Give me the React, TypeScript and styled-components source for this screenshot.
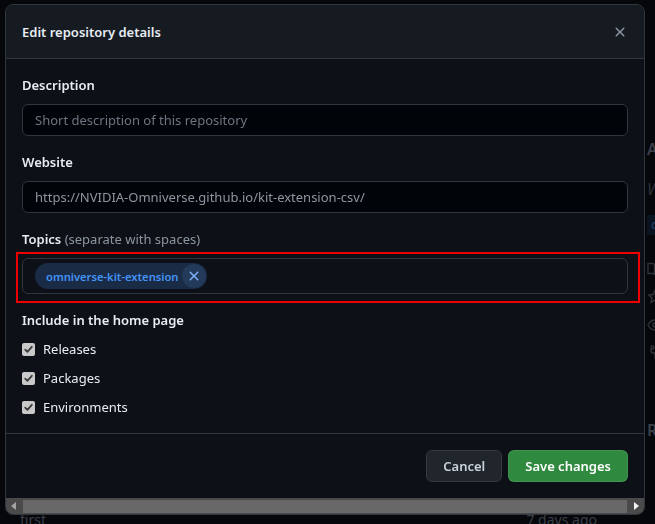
import React from "react";
import styled, { createGlobalStyle } from "styled-components";

const Global = createGlobalStyle`
  * { box-sizing: border-box; }
  html, body { margin: 0; padding: 0; background: #05070b; }
  body {
    width: 655px;
    height: 524px;
    overflow: hidden;
    font-family: "Noto Sans", "Segoe UI", sans-serif;
    -webkit-font-smoothing: antialiased;
  }
`;

/* ---------- background page (dimmed) ---------- */
const Page = styled.div`
  display: grid;
  grid-template-columns: 645px 1fr;
  width: 655px;
  height: 524px;
  overflow: hidden;
  background: #05070b;
`;

const Main = styled.div`
  display: flex;
  flex-direction: column;
  justify-content: flex-end;
`;

const MainRow = styled.div`
  display: flex;
  justify-content: space-between;
  padding: 0 48px 0 20px;
  height: 14px;
  font-size: 14px;
  line-height: 20px;
  color: #3a3f47;
`;

const Sidebar = styled.div`
  display: flex;
  flex-direction: column;
  padding: 139px 0 0 2px;
  color: #32373e;
  white-space: nowrap;
`;

const SideHeading = styled.div`
  font-size: 16px;
  font-weight: 600;
  line-height: 20px;
  color: #3b4048;
`;

const SideText = styled.div`
  margin-top: 20px;
  font-size: 16px;
  line-height: 20px;
  font-style: italic;
  color: #2e333a;
`;

const SideTopic = styled.div`
  margin-top: 16px;
  height: 20px;
  padding-left: 4px;
  background: #0a1320;
  font-size: 12px;
  line-height: 20px;
  font-weight: 600;
  color: #1f3a60;
`;

const SideIcons = styled.div`
  display: flex;
  flex-direction: column;
  gap: 12px;
  margin-top: 26px;
  color: #2e333a;
`;

const SideFoot = styled.div`
  margin-top: 58px;
  font-size: 16px;
  font-weight: 600;
  color: #3b4048;
`;

/* ---------- dialog ---------- */
const Dialog = styled.div`
  position: fixed;
  top: 4px;
  left: 5px;
  width: 640px;
  display: flex;
  flex-direction: column;
  background: #0d1117;
  border: 1px solid #30363d;
  border-radius: 8px;
  overflow: hidden;
`;

const Header = styled.div`
  display: flex;
  align-items: center;
  justify-content: space-between;
  height: 54px;
  padding: 0 16px;
  background: #161b22;
  border-bottom: 1px solid #30363d;
`;

const Title = styled.h1`
  margin: 0;
  font-size: 13px;
  font-weight: 600;
  line-height: 20px;
  color: #e6edf3;
`;

const IconButton = styled.button`
  display: flex;
  align-items: center;
  justify-content: center;
  width: 16px;
  height: 16px;
  padding: 0;
  border: 0;
  background: transparent;
  color: #8b949e;
`;

const Body = styled.div`
  display: flex;
  flex-direction: column;
  gap: 16px;
  padding: 16px;
`;

const Field = styled.div`
  display: flex;
  flex-direction: column;
`;

const Label = styled.label`
  display: block;
  margin-bottom: 9px;
  font-size: 13px;
  font-weight: 600;
  line-height: 20px;
  color: #e6edf3;
`;

const Hint = styled.span`
  font-weight: 400;
  color: #8d96a0;
`;

const TextInput = styled.input`
  height: 32px;
  padding: 0 12px;
  background: #010409;
  border: 1px solid #30363d;
  border-radius: 6px;
  font-family: inherit;
  font-size: 13px;
  color: #8d96a0;
  outline: none;
  &::placeholder { color: #6e7681; }
`;

const TopicBox = styled.div`
  position: relative;
  display: flex;
  align-items: center;
  height: 36px;
  padding: 0 12px;
  background: #0d1117;
  border: 1px solid #30363d;
  border-radius: 6px;
`;

const Highlight = styled.span`
  position: absolute;
  top: -7px;
  left: -7px;
  right: -13px;
  bottom: -10px;
  border: 2px solid #ee0000;
  pointer-events: none;
`;

const Chip = styled.span`
  display: inline-flex;
  align-items: center;
  height: 26px;
  padding: 0 1px 0 11px;
  background: #1a2b45;
  border-radius: 13px;
  font-size: 11.2px;
  font-weight: 600;
  color: #4493f8;
`;

const ChipRemove = styled.span`
  display: flex;
  align-items: center;
  justify-content: center;
  width: 24px;
  height: 24px;
  margin-left: 3px;
  border-radius: 12px;
  background: #243a5a;
  color: #7cb1f8;
`;

const Group = styled.div`
  display: flex;
  flex-direction: column;
  gap: 9px;
`;

const GroupTitle = styled.div`
  font-size: 13px;
  font-weight: 600;
  line-height: 20px;
  color: #e6edf3;
`;

const CheckRow = styled.label`
  display: flex;
  align-items: center;
  gap: 8px;
  height: 20px;
  font-size: 13px;
  color: #e6edf3;
`;

const CheckBox = styled.span`
  display: flex;
  align-items: center;
  justify-content: center;
  width: 13px;
  height: 13px;
  border-radius: 2px;
  background: #c9c9c9;
  color: #3c3c3c;
`;

const Footer = styled.div`
  display: flex;
  justify-content: flex-end;
  gap: 6px;
  padding: 16px;
  border-top: 1px solid #30363d;
`;

const Button = styled.button<{ $primary?: boolean }>`
  height: 32px;
  padding: 0 16px;
  border-radius: 6px;
  border: 1px solid ${(p) => (p.$primary ? "rgba(240,246,252,0.1)" : "#353b43")};
  background: ${(p) => (p.$primary ? "#2f8a3f" : "#21262d")};
  color: ${(p) => (p.$primary ? "#ffffff" : "#c9d1d9")};
  font-family: inherit;
  font-size: 13px;
  font-weight: 600;
`;

const ScrollBar = styled.div`
  display: flex;
  align-items: stretch;
  height: 16px;
  background: #4a4a4a;
`;

const ScrollArrow = styled.span<{ $light?: boolean }>`
  display: flex;
  align-items: center;
  justify-content: center;
  width: 16px;
  color: ${(p) => (p.$light ? "#f2f2f2" : "#a3a3a3")};
`;

const Thumb = styled.span`
  flex: 1;
  margin: 2px 1px 1px;
  background: #686868;
`;

const XIcon = ({ size = 16 }: { size?: number }) => (
  <svg width={size} height={size} viewBox="0 0 16 16" fill="currentColor" aria-hidden>
    <path d="M3.72 3.72a.75.75 0 0 1 1.06 0L8 6.94l3.22-3.22a.749.749 0 0 1 1.275.326.749.749 0 0 1-.215.734L9.06 8l3.22 3.22a.749.749 0 0 1-.326 1.275.749.749 0 0 1-.734-.215L8 9.06l-3.22 3.22a.751.751 0 0 1-1.042-.018.751.751 0 0 1-.018-1.042L6.94 8 3.72 4.78a.75.75 0 0 1 0-1.06Z" />
  </svg>
);

const Check = () => (
  <svg width="11" height="11" viewBox="0 0 11 11" fill="none" aria-hidden>
    <path d="M2.2 5.6 L4.4 7.9 L8.8 2.8" stroke="currentColor" strokeWidth="1.8" strokeLinecap="round" strokeLinejoin="round" />
  </svg>
);

const SideIcon = ({ d }: { d: string }) => (
  <svg width="16" height="16" viewBox="0 0 16 16" fill="none" stroke="currentColor" strokeWidth="1.4" aria-hidden>
    <path d={d} />
  </svg>
);

const options = ["Releases", "Packages", "Environments"];

export default function App() {
  return (
    <>
      <Global />
      <Page>
        <Main>
          <MainRow>
            <span>first</span>
            <span>7 days ago</span>
          </MainRow>
        </Main>
        <Sidebar>
          <SideHeading>About</SideHeading>
          <SideText>Work</SideText>
          <SideTopic>omniverse</SideTopic>
          <SideIcons>
            <SideIcon d="M1 2.5h4.5a2 2 0 0 1 2 2V14a1.5 1.5 0 0 0-1.5-1.5H1Z" />
            <SideIcon d="M8 1.5l1.9 4 4.3.5-3.2 3 .9 4.3L8 11.1l-3.9 2.2.9-4.3-3.2-3 4.3-.5Z" />
            <SideIcon d="M1 8s2.5-5 7-5 7 5 7 5-2.5 5-7 5-7-5-7-5Zm7 2a2 2 0 1 0 0-4 2 2 0 0 0 0 4Z" />
            <SideIcon d="M4 2.5a1.5 1.5 0 1 1 0 .1M4 4v2a2 2 0 0 0 2 2h2v3M8 12a1.5 1.5 0 1 1 0 .1" />
          </SideIcons>
          <SideFoot>Releases</SideFoot>
        </Sidebar>
      </Page>

      <Dialog role="dialog" aria-label="Edit repository details">
        <Header>
          <Title>Edit repository details</Title>
          <IconButton aria-label="Close">
            <XIcon />
          </IconButton>
        </Header>

        <Body>
          <Field>
            <Label>Description</Label>
            <TextInput placeholder="Short description of this repository" readOnly />
          </Field>
          <Field>
            <Label>Website</Label>
            <TextInput defaultValue="https://NVIDIA-Omniverse.github.io/kit-extension-csv/" readOnly />
          </Field>
          <Field>
            <Label>
              Topics <Hint>(separate with spaces)</Hint>
            </Label>
            <TopicBox>
              <Chip>
                omniverse-kit-extension
                <ChipRemove>
                  <XIcon />
                </ChipRemove>
              </Chip>
              <Highlight />
            </TopicBox>
          </Field>
          <Group>
            <GroupTitle>Include in the home page</GroupTitle>
            {options.map((o) => (
              <CheckRow key={o}>
                <CheckBox>
                  <Check />
                </CheckBox>
                {o}
              </CheckRow>
            ))}
          </Group>
        </Body>

        <Footer>
          <Button>Cancel</Button>
          <Button $primary>Save changes</Button>
        </Footer>

        <ScrollBar>
          <ScrollArrow>
            <svg width="6" height="8" viewBox="0 0 6 8" fill="currentColor"><path d="M5 0v8L0 4Z" /></svg>
          </ScrollArrow>
          <Thumb />
          <ScrollArrow $light>
            <svg width="6" height="8" viewBox="0 0 6 8" fill="currentColor"><path d="M1 0v8l5-4Z" /></svg>
          </ScrollArrow>
        </ScrollBar>
      </Dialog>
    </>
  );
}
